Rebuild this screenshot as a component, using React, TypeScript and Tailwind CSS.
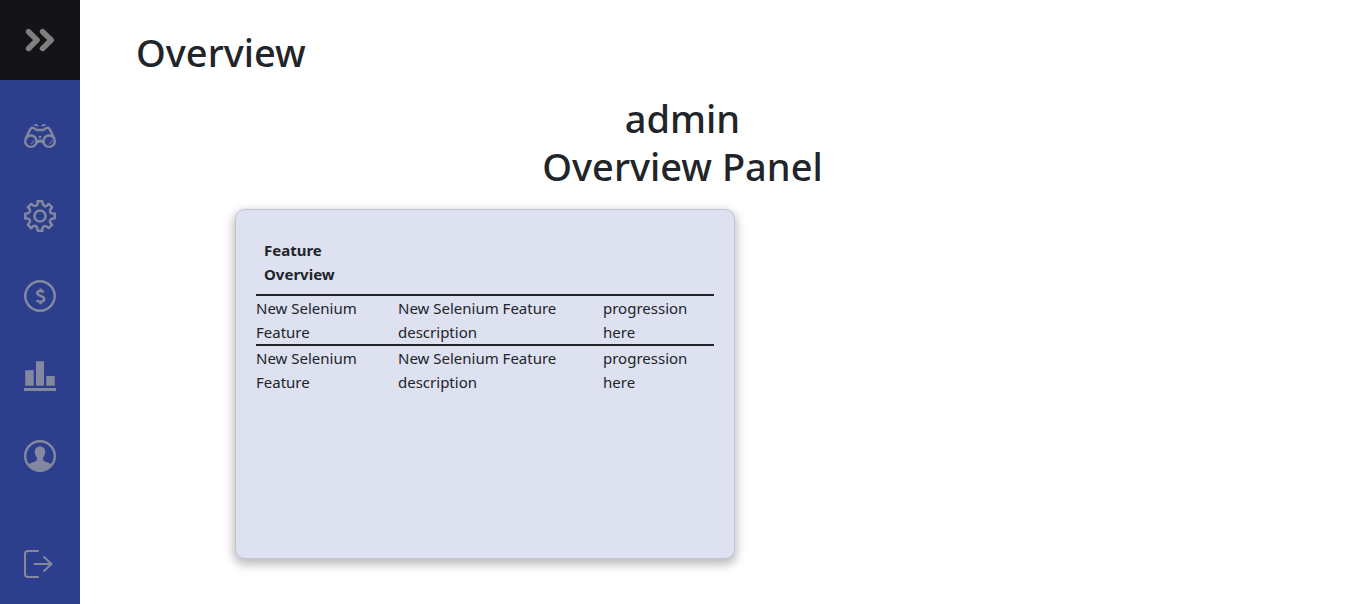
import type { ReactNode } from "react";

type Feature = { id: number; name: string; description: string; progress: string };

const features: Feature[] = [
  { id: 1, name: "New Selenium Feature", description: "New Selenium Feature description", progress: "progression here" },
  { id: 2, name: "New Selenium Feature", description: "New Selenium Feature description", progress: "progression here" },
];

function ChevronsIcon() {
  return (
    <svg viewBox="0 0 32 32" className="size-8" fill="none" stroke="currentColor" strokeWidth="5.6" strokeLinecap="round" strokeLinejoin="round" aria-hidden="true">
      <path d="M4.6 7.8 13 16l-8.4 8.4M18.6 7.8 27.2 16l-8.6 8.4" />
    </svg>
  );
}

function BinocularsIcon() {
  return (
    <svg viewBox="0 0 32 32" className="size-8" fill="none" stroke="currentColor" strokeWidth="2.4" strokeLinecap="round" strokeLinejoin="round" aria-hidden="true">
      <circle cx="6.9" cy="21.2" r="5.7" />
      <circle cx="25.1" cy="21.2" r="5.7" />
      <path d="M1.8 18.4 6.2 9.4c.8-1.500 2.200-2 3.600-1.400 1.300.6 1.500 2 3.400 2h5.600c1.900 0 2.100-1.400 3.400-2 1.400-.6 2.800-.1 3.600 1.400l4.400 9" />
      <path d="M12.800 22c1.600-1.200 4.800-1.200 6.400 0" strokeWidth="3" />
      <path d="M9.800 5.600c.7-2.200 4.200-2.100 4.800.9-1.400.1-3.400-.9-4.800-.9zM22.200 5.600c-.7-2.200-4.200-2.100-4.800.9 1.400.1 3.400-.9 4.800-.9z" fill="currentColor" stroke="none" />
      <path d="M9.600 20.800a3 3 0 0 1-2.200 3M27.800 20.800a3 3 0 0 1-2.200 3" strokeWidth="1" />
      <circle cx="16" cy="17" r="1.300" fill="currentColor" stroke="none" />
    </svg>
  );
}

const gearTeeth = [0, 45, 90, 135, 180, 225, 270, 315];

function GearIcon() {
  return (
    <svg viewBox="0 0 32 32" className="size-8" fill="none" stroke="currentColor" strokeWidth="2.5" strokeLinecap="round" strokeLinejoin="round" aria-hidden="true">
      <circle cx="16" cy="16" r="5.6" />
      {gearTeeth.map((angle) => (
        <path key={angle} d="M13.7 1.300h4.600l.5 2.600C19.400 6 21.500 6.800 23.100 5.500L24.800 4" transform={`rotate(${angle} 16 16)`} />
      ))}
    </svg>
  );
}

function DollarIcon() {
  return (
    <svg viewBox="0 0 32 32" className="size-8" fill="none" stroke="currentColor" strokeWidth="2.5" aria-hidden="true">
      <circle cx="16" cy="16" r="14.7" />
      <path d="M20 11.8c-1.2-.6-2.3-.9-3.6-.9-2 0-3.2.8-3.2 2.200 0 3.400 7 2.100 7 5.900 0 1.700-1.400 2.700-3.700 2.700-1.500 0-2.900-.3-4.200-1M16.500 8.400v2.800M16.500 21.400v2.800" />
    </svg>
  );
}

function BarsIcon() {
  return (
    <svg viewBox="0 0 32 32" className="size-8" fill="currentColor" aria-hidden="true">
      <path d="M1.200 10.200h8.500v15.600H1.200zM12 1.200h8v24.600h-8zM22.300 16h8.500v9.800h-8.500zM0 28h32v3H0z" />
    </svg>
  );
}

function UserIcon() {
  return (
    <svg viewBox="0 0 32 32" className="size-8" fill="currentColor" aria-hidden="true">
      <circle cx="16" cy="16" r="14.8" fill="none" stroke="currentColor" strokeWidth="2.4" />
      <path d="M16 6.600c-3.400 0-5.200 2.300-5.200 5.200 0 2.500.8 4.500 2.100 5.800.5 2.800-.5 3.800-2.600 4.400-2.800.8-5 1.600-6.500 3C7 28.800 11.200 31 16 31s9-2.200 12.200-6c-1.500-1.400-3.700-2.200-6.500-3-2.100-.6-3.100-1.600-2.600-4.400 1.300-1.300 2.100-3.300 2.100-5.800 0-2.900-1.800-5.200-5.200-5.200z" />
    </svg>
  );
}

function LogoutIcon() {
  return (
    <svg viewBox="0 0 32 32" className="size-8" fill="none" stroke="currentColor" strokeWidth="2" strokeLinecap="round" strokeLinejoin="round" aria-hidden="true">
      <path d="M14 3H4a3 3 0 0 0-3 3v20a3 3 0 0 0 3 3h10M10.500 16H27M20 9l7.500 7-7.500 7" />
    </svg>
  );
}

const links: { label: string; href: string; icon: ReactNode }[] = [
  { label: "Overview", href: "#overview", icon: <BinocularsIcon /> },
  { label: "Settings", href: "#settings", icon: <GearIcon /> },
  { label: "Billing", href: "#billing", icon: <DollarIcon /> },
  { label: "Statistics", href: "#statistics", icon: <BarsIcon /> },
  { label: "Profile", href: "#profile", icon: <UserIcon /> },
];

function Sidebar() {
  return (
    <nav aria-label="Main" className="flex w-20 shrink-0 flex-col bg-[#2c3e8c] text-[#8388a0]">
      <button type="button" aria-label="Expand menu" className="flex h-20 items-center justify-center bg-[#141418] text-[#7f7f7f]">
        <ChevronsIcon />
      </button>
      <ul className="mt-4">
        {links.map((link) => (
          <li key={link.label}>
            <a href={link.href} aria-label={link.label} className="flex h-20 items-center justify-center">
              {link.icon}
            </a>
          </li>
        ))}
      </ul>
      <a href="#logout" aria-label="Log out" className="mt-auto flex h-20 items-center justify-center">
        <LogoutIcon />
      </a>
    </nav>
  );
}

function FeatureTable() {
  return (
    <table className="w-full table-fixed text-left align-top text-[15px] leading-6">
      <colgroup>
        <col className="w-[142px]" />
        <col className="w-[205px]" />
        <col />
      </colgroup>
      <thead>
        <tr>
          <th scope="col" className="p-2 pr-12 font-bold">Feature Overview</th>
          <td />
          <td />
        </tr>
      </thead>
      <tbody>
        {features.map((feature) => (
          <tr key={feature.id} className="border-t-2 border-[#212529] align-top">
            <td className="pr-8">{feature.name}</td>
            <td className="pr-8">{feature.description}</td>
            <td className="pr-4">{feature.progress}</td>
          </tr>
        ))}
      </tbody>
    </table>
  );
}

export default function App() {
  return (
    <div className="flex min-h-screen bg-white font-['Segoe_UI','Noto_Sans',sans-serif] text-[#212529]">
      <Sidebar />
      <main className="min-w-0 grow pt-7 pr-[137px] pl-14">
        <h1 className="text-[38px] leading-[48px] font-medium">Overview</h1>
        <h2 className="mt-[18px] text-center text-[38px] leading-[48px] font-medium">
          admin
          <br />
          Overview Panel
        </h2>
        <section className="mt-[19px] ml-[99px] min-h-[350px] max-w-[500px] rounded-[10px] border border-[#c0c4d6] bg-[#dee1f0] p-5 shadow-[0_4px_10px_2px_rgba(0,0,0,0.25)]">
          <FeatureTable />
        </section>
      </main>
    </div>
  );
}
